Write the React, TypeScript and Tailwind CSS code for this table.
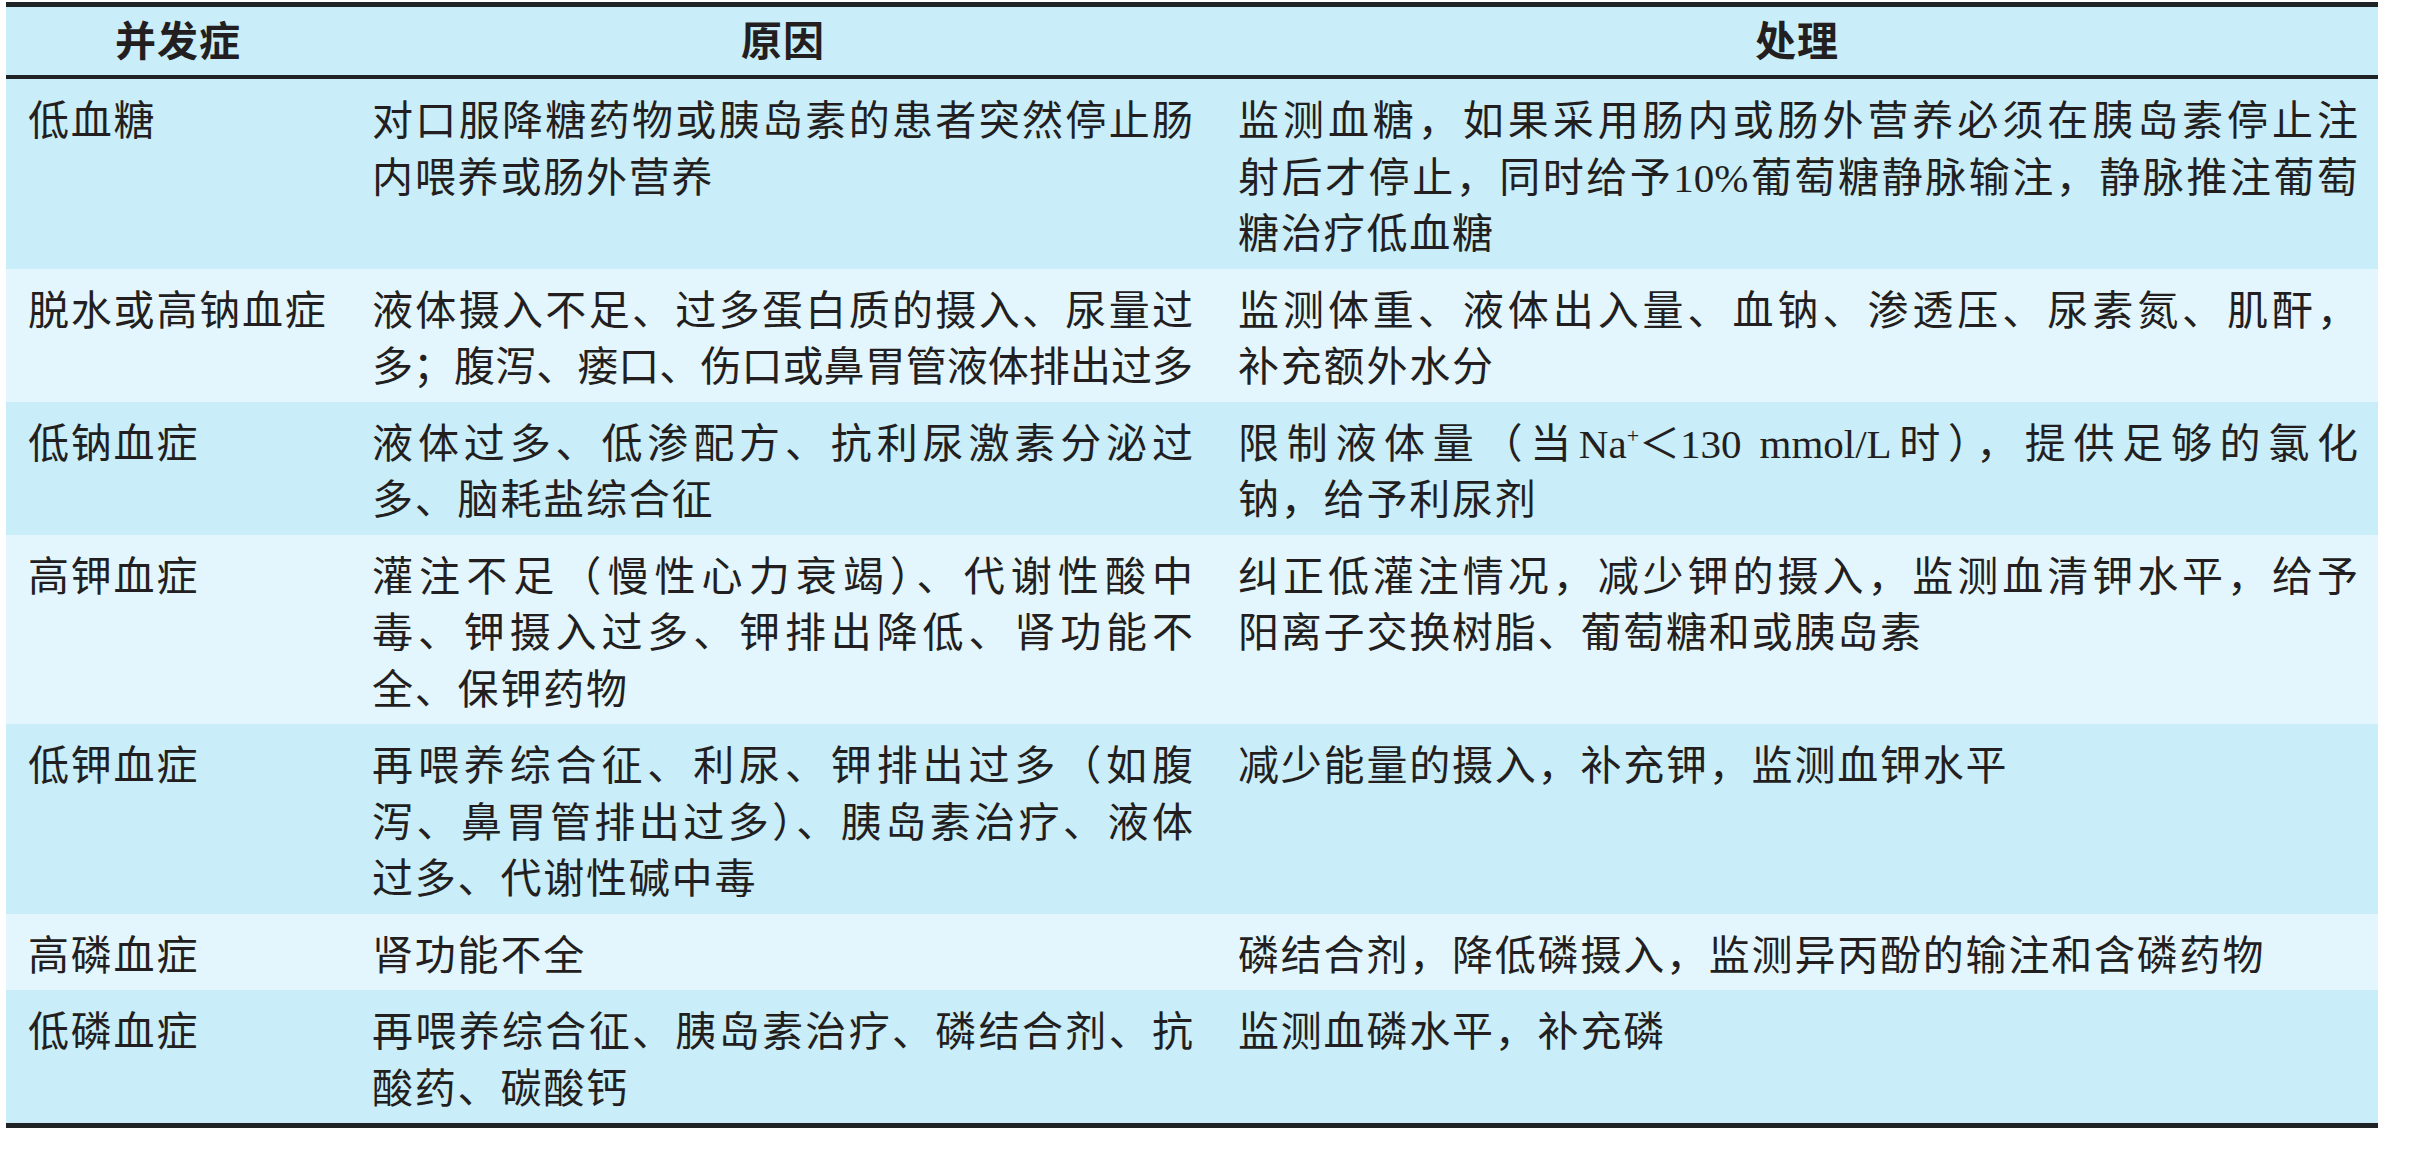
import type { ReactNode } from 'react';

type Row = {
  name: string;
  cause: ReactNode[];
  treat: ReactNode[];
  causeFull?: boolean;
};

const rows: Row[] = [
  {
    name: '低血糖',
    cause: ['对口服降糖药物或胰岛素的患者突然停止肠', '内喂养或肠外营养'],
    treat: [
      '监测血糖，如果采用肠内或肠外营养必须在胰岛素停止注',
      '射后才停止，同时给予10%葡萄糖静脉输注，静脉推注葡萄',
      '糖治疗低血糖',
    ],
  },
  {
    name: '脱水或高钠血症',
    cause: ['液体摄入不足、过多蛋白质的摄入、尿量过', '多；腹泻、瘘口、伤口或鼻胃管液体排出过多'],
    causeFull: true,
    treat: ['监测体重、液体出入量、血钠、渗透压、尿素氮、肌酐，', '补充额外水分'],
  },
  {
    name: '低钠血症',
    cause: ['液体过多、低渗配方、抗利尿激素分泌过', '多、脑耗盐综合征'],
    treat: [
      <>
        限制液体量（当Na<sup className="text-[22px] -top-[15px]">+</sup>＜130 mmol/L时），提供足够的氯化
      </>,
      '钠，给予利尿剂',
    ],
  },
  {
    name: '高钾血症',
    cause: ['灌注不足（慢性心力衰竭）、代谢性酸中', '毒、钾摄入过多、钾排出降低、肾功能不', '全、保钾药物'],
    treat: ['纠正低灌注情况，减少钾的摄入，监测血清钾水平，给予', '阳离子交换树脂、葡萄糖和或胰岛素'],
  },
  {
    name: '低钾血症',
    cause: ['再喂养综合征、利尿、钾排出过多（如腹', '泻、鼻胃管排出过多）、胰岛素治疗、液体', '过多、代谢性碱中毒'],
    treat: ['减少能量的摄入，补充钾，监测血钾水平'],
  },
  {
    name: '高磷血症',
    cause: ['肾功能不全'],
    treat: ['磷结合剂，降低磷摄入，监测异丙酚的输注和含磷药物'],
  },
  {
    name: '低磷血症',
    cause: ['再喂养综合征、胰岛素治疗、磷结合剂、抗', '酸药、碳酸钙'],
    treat: ['监测血磷水平，补充磷'],
  },
];

// full lines are justified to the cell edge, the last one keeps its natural spacing
function Lines({ lines, full = false }: { lines: ReactNode[]; full?: boolean }) {
  return (
    <>
      {lines.map((line, i) => {
        const last = i === lines.length - 1 && !full;
        return (
          <div
            key={i}
            className={
              last
                ? 'whitespace-nowrap tracking-[1.8px]'
                : 'whitespace-nowrap tracking-normal text-justify [text-align-last:justify]'
            }
          >
            {line}
          </div>
        );
      })}
    </>
  );
}

export default function App() {
  return (
    <div
      className="w-[2424px] h-[1152px] bg-white pt-[2px] pl-[6px] text-[#231f20]"
      style={{ fontFamily: '"Liberation Serif", "Noto Sans CJK SC", serif' }}
    >
      <div className="w-[2372px] border-t-[5px] border-b-[5px] border-[#1f2326]">
        {/* Header */}
        <div className="grid grid-cols-[344px_866px_1162px] h-[72px] pt-[4px] items-center bg-[#c9edf9] border-b-[4px] border-[#1f2326] text-[41px] font-bold tracking-[1px]">
          <div className="text-center">并发症</div>
          <div className="text-center">原因</div>
          <div className="text-center">处理</div>
        </div>

        {/* Body */}
        {rows.map((r, i) => (
          <div
            key={r.name}
            className={`grid grid-cols-[344px_866px_1162px] pt-[14px] pb-[6px] text-[41px] leading-[56.5px] ${
              i % 2 === 0 ? 'bg-[#c9edf9]' : 'bg-[#e3f6fd]'
            }`}
          >
            <div className="pl-[22px] whitespace-nowrap tracking-[1.8px]">{r.name}</div>
            <div className="pl-[22px] pr-[23px]">
              <Lines lines={r.cause} full={r.causeFull} />
            </div>
            <div className="pl-[22px] pr-[20px]">
              <Lines lines={r.treat} />
            </div>
          </div>
        ))}
      </div>
    </div>
  );
}
